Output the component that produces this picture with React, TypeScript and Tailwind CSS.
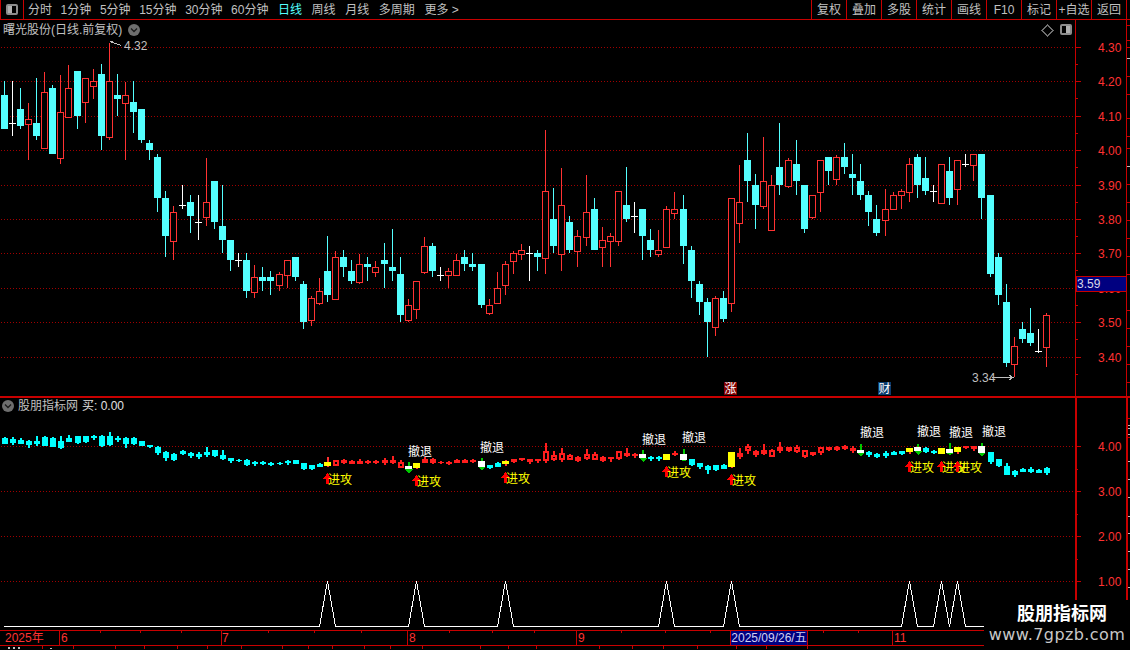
// K线行情页:主图 + 股朋指标网副图
const CYAN = '#54ffff'
const RED = '#ff3232'
const LINE = '#c80000'
const GRID = '#a00000'
const GRAY = '#c0c0c0'

const px = (i: number) => Math.round(3.8 + 8.08 * i)

const tabsLeft = ['分时', '1分钟', '5分钟', '15分钟', '30分钟', '60分钟']
const tabsRight = ['日线', '周线', '月线', '多周期', '更多 >']
const actions = ['复权', '叠加', '多股', '统计', '画线', 'F10', '标记', '+自选', '返回']

type Candle = [string, number, number, number, number]

// 主图K线 [类型, 上影, 实体上, 实体下, 下影],单位是页面像素
const candles: Candle[] = [
  ['c', 81, 95, 129, 129], ['w', 81, 123, 123, 136], ['c', 88, 109, 126, 129], ['r', 103, 119, 124, 160],
  ['c', 78, 123, 136, 140], ['r', 72, 92, 148, 148], ['c', 85, 88, 154, 154], ['r', 75, 112, 158, 164],
  ['r', 65, 88, 117, 117], ['c', 71, 71, 116, 129], ['r', 78, 78, 102, 123], ['r', 69, 81, 86, 99],
  ['c', 64, 74, 136, 150], ['r', 43, 81, 137, 140], ['c', 74, 95, 99, 116], ['r', 82, 95, 103, 160],
  ['c', 81, 102, 112, 133], ['c', 109, 109, 140, 143], ['c', 140, 143, 150, 160], ['c', 154, 157, 198, 212],
  ['c', 191, 198, 236, 257], ['r', 206, 212, 241, 260], ['w', 185, 205, 205, 209], ['c', 195, 202, 216, 233],
  ['w', 195, 222, 222, 240], ['r', 158, 202, 217, 226], ['c', 181, 181, 222, 229], ['c', 185, 226, 240, 253],
  ['c', 240, 240, 260, 271], ['w', 253, 260, 260, 267], ['c', 253, 260, 291, 298], ['r', 265, 277, 292, 298],
  ['c', 267, 277, 281, 291], ['c', 271, 277, 281, 295], ['r', 272, 274, 285, 291], ['r', 260, 260, 275, 288],
  ['c', 257, 257, 277, 281], ['c', 281, 284, 322, 329], ['r', 296, 298, 320, 326], ['r', 278, 291, 303, 305],
  ['c', 236, 271, 295, 302], ['r', 251, 257, 299, 299], ['c', 250, 257, 267, 277], ['c', 260, 271, 281, 284],
  ['r', 254, 264, 282, 284], ['c', 257, 264, 267, 281], ['r', 261, 267, 272, 277], ['c', 243, 260, 264, 288],
  ['c', 229, 267, 271, 281], ['c', 257, 274, 315, 322], ['r', 299, 305, 320, 322], ['r', 281, 281, 309, 319],
  ['r', 237, 246, 272, 274], ['c', 243, 246, 271, 277], ['w', 267, 275, 275, 281], ['r', 268, 271, 275, 288],
  ['r', 254, 260, 275, 275], ['c', 250, 257, 264, 271], ['c', 253, 264, 267, 271], ['c', 264, 264, 305, 308],
  ['r', 299, 305, 313, 315], ['r', 272, 288, 303, 303], ['r', 261, 264, 285, 295], ['r', 251, 253, 261, 274],
  ['r', 244, 250, 254, 260], ['w', 246, 253, 253, 281], ['c', 250, 253, 257, 271], ['r', 130, 191, 258, 274],
  ['c', 188, 219, 246, 253], ['r', 168, 205, 254, 271], ['c', 216, 222, 250, 253], ['r', 230, 236, 251, 267],
  ['r', 175, 212, 237, 246], ['c', 198, 209, 250, 250], ['r', 227, 240, 247, 267], ['r', 233, 236, 241, 267],
  ['r', 191, 191, 241, 246], ['c', 167, 205, 219, 222], ['w', 202, 216, 216, 233], ['c', 209, 209, 236, 260],
  ['c', 229, 240, 250, 257], ['r', 230, 250, 254, 257], ['r', 206, 209, 247, 247], ['r', 192, 209, 213, 219],
  ['c', 195, 209, 246, 264], ['c', 246, 250, 281, 298], ['c', 281, 284, 302, 315], ['c', 298, 302, 322, 357],
  ['r', 296, 298, 327, 336], ['c', 291, 298, 319, 322], ['r', 198, 198, 303, 312], ['r', 165, 202, 223, 243],
  ['c', 133, 160, 181, 202], ['c', 174, 185, 205, 229], ['r', 137, 181, 206, 209], ['r', 175, 185, 230, 230],
  ['c', 123, 167, 185, 195], ['r', 158, 160, 186, 188], ['c', 140, 164, 181, 195], ['c', 185, 185, 229, 233],
  ['r', 195, 195, 217, 219], ['r', 160, 160, 192, 212], ['c', 157, 157, 171, 185], ['r', 155, 157, 179, 185],
  ['c', 143, 157, 167, 174], ['c', 154, 174, 178, 195], ['c', 164, 181, 195, 200], ['c', 191, 195, 212, 226],
  ['c', 205, 219, 233, 236], ['r', 189, 209, 220, 236], ['r', 192, 195, 209, 209], ['r', 189, 191, 195, 209],
  ['r', 158, 164, 192, 202], ['c', 154, 157, 185, 198], ['c', 157, 178, 191, 195], ['w', 185, 191, 191, 202],
  ['r', 164, 164, 203, 203], ['c', 157, 171, 198, 205], ['r', 160, 160, 189, 205], ['w', 154, 164, 164, 167],
  ['r', 154, 154, 165, 181], ['c', 154, 154, 198, 219], ['c', 195, 195, 274, 277], ['c', 253, 257, 295, 305],
  ['c', 284, 302, 363, 367], ['r', 337, 346, 364, 377], ['c', 322, 329, 339, 343], ['c', 308, 333, 343, 346],
  ['w', 329, 351, 351, 353], ['r', 313, 315, 347, 367],
]

// 副图K线,数值是相对 y=395 的 3 倍坐标;y 黄块,W 白块带绿箭头
const bars: Candle[] = [
  ['c', 125, 128, 147, 148], ['c', 126, 133, 143, 150], ['c', 129, 135, 146, 147], ['c', 135, 138, 150, 159],
  ['c', 123, 138, 148, 152], ['c', 123, 126, 152, 153], ['c', 126, 128, 155, 156], ['c', 123, 138, 158, 162],
  ['c', 120, 129, 141, 142], ['c', 123, 124, 143, 147], ['c', 123, 124, 140, 144], ['c', 119, 122, 130, 135],
  ['c', 120, 122, 152, 156], ['c', 111, 123, 150, 153], ['c', 122, 129, 136, 141], ['c', 126, 129, 147, 159],
  ['c', 125, 129, 147, 150], ['c', 138, 139, 153, 153], ['c', 150, 151, 155, 159], ['c', 153, 156, 175, 180],
  ['c', 167, 170, 189, 198], ['c', 174, 176, 195, 198], ['c', 165, 168, 177, 180], ['c', 171, 174, 184, 189],
  ['c', 171, 176, 185, 192], ['c', 156, 170, 180, 186], ['c', 165, 166, 184, 186], ['c', 165, 180, 192, 195],
  ['c', 189, 190, 198, 204], ['c', 192, 194, 198, 201], ['c', 192, 195, 210, 213], ['c', 198, 201, 208, 213],
  ['c', 198, 201, 207, 210], ['c', 201, 204, 209, 213], ['c', 201, 203, 207, 209], ['c', 195, 197, 205, 210],
  ['c', 195, 196, 207, 208], ['c', 204, 205, 222, 225], ['c', 210, 211, 222, 225], ['c', 204, 207, 215, 216],
  ['y', 186, 201, 213, 216], ['r', 195, 195, 213, 213], ['r', 192, 195, 203, 207], ['r', 195, 198, 207, 207],
  ['r', 192, 198, 207, 207], ['r', 195, 197, 204, 207], ['r', 195, 197, 204, 207], ['r', 189, 195, 204, 210],
  ['r', 183, 195, 204, 207], ['r', 195, 201, 220, 220], ['W', 201, 213, 222, 237], ['y', 204, 204, 219, 222],
  ['r', 186, 192, 204, 204], ['r', 189, 192, 204, 207], ['r', 198, 200, 205, 207], ['r', 198, 200, 207, 210],
  ['r', 192, 195, 203, 204], ['r', 192, 194, 203, 204], ['r', 192, 195, 201, 204], ['W', 189, 198, 216, 225],
  ['c', 210, 211, 220, 222], ['c', 201, 204, 216, 216], ['y', 195, 198, 207, 213], ['r', 192, 192, 201, 204],
  ['r', 189, 190, 195, 198], ['r', 192, 193, 201, 207], ['r', 192, 193, 198, 204], ['r', 144, 168, 198, 204],
  ['r', 168, 180, 195, 198], ['r', 159, 174, 195, 201], ['r', 177, 180, 195, 195], ['r', 183, 186, 198, 201],
  ['r', 162, 177, 192, 195], ['r', 171, 177, 195, 195], ['r', 183, 186, 198, 201], ['r', 186, 186, 192, 201],
  ['r', 168, 168, 192, 195], ['r', 159, 174, 183, 186], ['r', 174, 177, 183, 189], ['W', 165, 177, 189, 201],
  ['c', 183, 186, 192, 198], ['c', 183, 186, 192, 198], ['y', 177, 177, 195, 195], ['r', 168, 174, 180, 183],
  ['W', 162, 177, 195, 198], ['c', 192, 193, 209, 213], ['c', 204, 205, 216, 222], ['c', 210, 212, 225, 237],
  ['c', 210, 211, 225, 228], ['c', 207, 210, 222, 222], ['y', 171, 171, 216, 219], ['r', 159, 174, 186, 192],
  ['r', 147, 153, 168, 177], ['r', 165, 168, 180, 186], ['r', 147, 165, 177, 180], ['r', 162, 165, 186, 186],
  ['r', 141, 156, 168, 174], ['r', 156, 157, 168, 171], ['r', 150, 156, 171, 174], ['r', 165, 166, 186, 189],
  ['r', 171, 172, 180, 183], ['r', 156, 157, 174, 180], ['r', 156, 156, 165, 168], ['r', 153, 156, 165, 168],
  ['r', 150, 153, 162, 165], ['r', 153, 159, 168, 174], ['W', 147, 165, 174, 183], ['c', 168, 171, 180, 186],
  ['c', 174, 177, 186, 189], ['c', 168, 174, 183, 189], ['c', 168, 170, 180, 180], ['c', 168, 169, 176, 180],
  ['y', 159, 159, 171, 177], ['W', 147, 156, 168, 180], ['c', 156, 159, 171, 174], ['c', 165, 168, 174, 177],
  ['y', 159, 159, 177, 177], ['W', 144, 162, 174, 180], ['y', 156, 156, 171, 177], ['r', 153, 154, 159, 162],
  ['r', 153, 154, 162, 168], ['W', 144, 153, 174, 183], ['c', 171, 171, 201, 207], ['c', 192, 193, 213, 216],
  ['c', 204, 213, 240, 240], ['c', 225, 228, 240, 246], ['c', 219, 221, 231, 231], ['c', 216, 222, 231, 234],
  ['c', 222, 224, 234, 234], ['c', 216, 219, 234, 240],
]

const retreats = [
  [408, 452], [480, 448], [642, 440], [682, 438], [860, 433], [917, 432], [949, 433], [982, 432],
]
const attacks = [
  [40, 479], [51, 481], [62, 478], [82, 472], [90, 480], [112, 467], [116, 467], [118, 467],
]
const mainLevels = ['4.30', '4.20', '4.10', '4.00', '3.90', '3.80', '3.70', '3.60', '3.50', '3.40']
const mainY = [47, 81, 116, 150, 185, 219, 253, 288, 322, 357]
const subLevels = [['4.00', 446], ['3.00', 491], ['2.00', 536], ['1.00', 581]] as const
const monthMarks = [[61, '6', 59], [222, '7', 221], [409, '8', 407], [578, '9', 576], [894, '11', 892]] as const
const minorTicks = [100, 140, 181, 268, 314, 361, 449, 492, 534, 621, 665, 710, 823, 858]
const stripTicks = [42, 73, 115, 144, 177, 207, 241, 282, 308, 332, 364, 390, 422, 480, 508, 536, 599, 632, 663, 697, 736, 766, 807]
const edgeTicks = [25, 40, 47, 58, 76, 94, 118, 136, 148, 166, 184, 202, 220, 238, 256, 274, 310, 328, 346, 364, 382]
const subEdgeTicks = [425, 428, 434, 461, 479, 497, 516, 533, 551, 569, 587]

function Wick({ x, from, to, fill, w = 1 }: { x: number; from: number; to: number; fill: string; w?: number }) {
  if (to <= from) return null
  return <rect x={x} y={from} width={w} height={to - from} fill={fill} />
}

function MainCandle({ c, i }: { c: Candle; i: number }) {
  const [kind, top, open, close, low] = c
  const x = px(i)
  const h = close - open
  if (kind === 'w') {
    return (
      <g>
        <rect x={x} y={top} width={1} height={low - top} fill="#fff" />
        <rect x={x - 3} y={open} width={7} height={1} fill="#fff" />
      </g>
    )
  }
  const color = kind === 'c' ? CYAN : RED
  return (
    <g>
      <Wick x={x} from={top} to={open} fill={color} />
      <Wick x={x} from={close} to={low} fill={color} />
      {kind === 'c' ? (
        <rect x={x - 3} y={open} width={7} height={h} fill={color} />
      ) : (
        <rect x={x - 2.5} y={open + 0.5} width={6} height={h} fill="#000" stroke={color} />
      )}
    </g>
  )
}

function SubBar({ b, i }: { b: Candle; i: number }) {
  const [kind, a, c, d, e] = b
  const x = px(i)
  const top = 395 + Math.round(a / 3)
  const open = 395 + Math.round(c / 3)
  const close = 395 + Math.round(d / 3)
  const low = 395 + Math.round(e / 3)
  const h = Math.max(close - open, 1)
  if (kind === 'W') {
    return (
      <g>
        <Wick x={x} from={top} to={open} fill="#00c800" w={2} />
        <polygon points={`${x - 3},${close} ${x + 5},${close} ${x + 1},${low}`} fill="#00c800" />
        <rect x={x - 3} y={open} width={7} height={h} fill="#fff" />
      </g>
    )
  }
  if (kind === 'y') {
    return (
      <g>
        <Wick x={x} from={top} to={low} fill={RED} w={2} />
        <rect x={x - 3} y={open} width={7} height={h} fill="#ffff00" />
      </g>
    )
  }
  const color = kind === 'c' ? '#00ffff' : '#ff1e1e'
  const solid = kind === 'c' || h < 4
  return (
    <g>
      <Wick x={x} from={top} to={low} fill={color} w={2} />
      {solid ? (
        <rect x={x - 2} y={open} width={6} height={h} fill={color} />
      ) : (
        <rect x={x - 1} y={open + 1} width={4} height={h - 2} fill="#000" stroke={color} strokeWidth={2} />
      )}
    </g>
  )
}

function Chevron() {
  return (
    <span className="flex h-3 w-3 items-center justify-center rounded-full bg-[#6e6e6e]">
      <svg width="8" height="6" viewBox="0 0 8 6">
        <path d="M1 1.5 L4 4.5 L7 1.5" fill="none" stroke="#1a1a1a" strokeWidth="1.3" />
      </svg>
    </span>
  )
}

function PaneIcon({ side }: { side: 'left' | 'right' }) {
  return (
    <span className="flex h-[11px] w-3 rounded-[2px] border-2 border-[#8c8c8c]">
      <span className={side === 'left' ? 'h-full w-1 bg-[#b0b0b0]' : 'ml-auto h-full w-1 bg-[#b0b0b0]'} />
    </span>
  )
}

function Toolbar() {
  return (
    <div className="flex h-5 shrink-0 items-center border-b border-[#c80000] text-[12px] text-[#c0c0c0]">
      <div className="flex h-full w-6 items-center justify-center border-x border-[#c80000]">
        <PaneIcon side="left" />
      </div>
      <div className="ml-1 flex flex-1">
        <div className="flex gap-[8.6px]">
          {tabsLeft.map((t) => (
            <span key={t}>{t}</span>
          ))}
        </div>
        <div className="ml-[9.5px] flex gap-[9.6px]">
          {tabsRight.map((t) => (
            <span key={t} className={t === '日线' ? 'text-[#54ffff]' : ''}>{t}</span>
          ))}
        </div>
      </div>
      <div className="flex h-full">
        {actions.map((t) => (
          <span key={t} className="flex h-full w-[35px] items-center justify-center border-l border-[#c80000]">{t}</span>
        ))}
        <span className="h-full w-1 border-l border-[#c80000]" />
      </div>
    </div>
  )
}

function MainPane() {
  return (
    <div className="relative flex h-[376px] shrink-0">
      <svg width="1075" height="376" viewBox="0 20 1075 376" shapeRendering="crispEdges" className="shrink-0">
        {mainY.map((y) => (
          <line key={y} x1="1" x2="1075" y1={y + 0.5} y2={y + 0.5} stroke={GRID} strokeDasharray="1 2" />
        ))}
        {candles.map((c, i) => (
          <MainCandle key={i} c={c} i={i} />
        ))}
        <path d="M109.5 41 L113 41 M110 41.5 L121 45.5" stroke={GRAY} fill="none" />
        <text x="124" y="50" fontSize="12" fill={GRAY}>4.32</text>
        <path d="M992 377.5 H1013 M1009 375 L1013 377.5 L1009 380" stroke={GRAY} fill="none" />
        <text x="972" y="382" fontSize="12" fill={GRAY}>3.34</text>
        <rect x="724" y="382" width="13" height="13" fill="#800000" />
        <text x="724.5" y="393" fontSize="12" fill="#fff">涨</text>
        <rect x="878" y="382" width="13" height="13" fill="#0a3c6e" />
        <text x="878.5" y="393" fontSize="12" fill="#fff">财</text>
        <path d="M1047.5 25 L1053 30.5 L1047.5 36 L1042 30.5 Z" fill="none" stroke="#707070" />
      </svg>
      <div className="flex-1 border-l border-[#c80000]">
        <svg width="54" height="376" viewBox="1076 20 54 376" shapeRendering="crispEdges">
          {mainY.map((y, i) => (
            <g key={y}>
              <rect x="1076" y={y} width="5" height="1" fill={LINE} />
              <rect x="1076" y={y + 17} width="2" height="1" fill={LINE} />
              <text x="1098" y={y + 5} fontSize="12" fill={RED}>{mainLevels[i]}</text>
            </g>
          ))}
          <rect x="1126" y="20" width="1" height="376" fill={LINE} />
          {edgeTicks.map((y) => (
            <rect key={y} x="1127" y={y} width="3" height="1" fill={y === 58 || y === 166 ? '#c0c0c0' : LINE} />
          ))}
          <rect x="1076" y="276" width="50" height="15" fill="#000080" stroke={LINE} />
          <text x="1077" y="288" fontSize="12" fill="#d8d8e8">3.59</text>
        </svg>
      </div>
      <div className="absolute left-[3px] top-[3px] flex items-center gap-[6px] text-[12px] leading-[14px] text-[#c0c0c0]">
        <span>曙光股份(日线.前复权)</span>
        <Chevron />
      </div>
      <div className="absolute left-[1060px] top-[4px]">
        <PaneIcon side="right" />
      </div>
    </div>
  )
}

function SubPane() {
  const pulse = [`4,626.5`]
  attacks.forEach(([i]) => {
    const x = px(i) + 0.5
    pulse.push(`${x - 8},626.5`, `${x},581`, `${x + 8},626.5`)
  })
  pulse.push('1047,626.5')
  return (
    <div className="relative flex h-[234px] shrink-0 border-t-2 border-[#c80000]">
      <svg width="1075" height="232" viewBox="0 398 1075 232" shapeRendering="crispEdges" className="shrink-0">
        {subLevels.map(([, y]) => (
          <line key={y} x1="1" x2="1075" y1={y + 0.5} y2={y + 0.5} stroke={GRID} strokeDasharray="1 2" />
        ))}
        {bars.map((b, i) => (
          <SubBar key={i} b={b} i={i} />
        ))}
        {retreats.map(([x, y]) => (
          <text key={x} x={x} y={y + 4} fontSize="12" fill="#fff">撤退</text>
        ))}
        {attacks.map(([i, y]) => {
          const x = px(i)
          return (
            <g key={i}>
              <path d={`M${x - 4} ${y} L${x + 0.5} ${y - 6} L${x + 5} ${y} H${x + 2} V${y + 5} H${x - 1} V${y} Z`} fill="#ff0000" />
              <text x={x + 1} y={y + 5} fontSize="12" fill="#ffff00">进攻</text>
            </g>
          )
        })}
        <polyline points={pulse.join(' ')} fill="none" stroke="#fff" />
      </svg>
      <div className="flex-1 border-l-2 border-[#c80000]">
        <svg width="53" height="232" viewBox="1077 398 53 232" shapeRendering="crispEdges">
          {subLevels.map(([label, y]) => (
            <g key={y}>
              <rect x="1077" y={y} width="4" height="1" fill={LINE} />
              <rect x="1077" y={y + 23} width="1" height="1" fill={LINE} />
              <text x="1098" y={y + 5} fontSize="12" fill={RED}>{label}</text>
            </g>
          ))}
          <rect x="1126" y="398" width="2" height="232" fill={LINE} />
          <rect x="1128" y="418" width="2" height="1" fill={LINE} />
          <rect x="1128" y="437" width="2" height="1" fill={LINE} />
          {subEdgeTicks.map((y) => (
            <rect key={y} x="1128" y={y} width="2" height="1" fill="#c0c0c0" />
          ))}
        </svg>
      </div>
      <div className="absolute left-[2px] top-[1px] flex items-center gap-1 text-[12px] leading-[14px]">
        <Chevron />
        <span className="text-[#c0c0c0]">股朋指标网</span>
        <span className="text-[#e0e0e0]">买: 0.00</span>
      </div>
    </div>
  )
}

function TimeAxis() {
  return (
    <div className="relative h-[16px] shrink-0 border-y border-[#c80000] text-[12px] leading-[14px] text-[#ff3232]">
      <svg width="1130" height="14" viewBox="0 631 1130 14" shapeRendering="crispEdges" className="absolute left-0 top-0">
        {monthMarks.map(([x, label, line]) => (
          <g key={label}>
            <rect x={line} y="631" width="1" height="14" fill={LINE} />
            <text x={x} y="642" fontSize="12" fill={RED}>{label}</text>
          </g>
        ))}
        {minorTicks.map((x) => (
          <rect key={x} x={x} y="631" width="1" height="2" fill={LINE} />
        ))}
      </svg>
      <span className="absolute left-[5px] top-0">2025年</span>
      <span className="absolute left-[730px] top-0 h-[14px] w-[78px] border-x border-[#c80000] bg-[#000080] text-center text-[#d0d0f0]">2025/09/26/五</span>
    </div>
  )
}

function BottomStrip() {
  return (
    <div className="h-[3px] overflow-hidden">
      <svg width="1130" height="3" viewBox="0 647 1130 3" shapeRendering="crispEdges">
        {stripTicks.map((x) => (
          <rect key={x} x={x} y="647" width="1" height="3" fill={LINE} />
        ))}
        <rect x="8" y="648" width="2" height="2" fill={GRAY} />
        <rect x="13" y="648" width="2" height="2" fill={GRAY} />
        <rect x="18" y="648" width="2" height="2" fill={GRAY} />
        <rect x="50" y="649" width="2" height="1" fill={GRAY} />
      </svg>
    </div>
  )
}

export default function App() {
  return (
    <div className="relative flex h-[650px] w-[1130px] flex-col overflow-hidden bg-black font-['Liberation_Sans','Noto_Sans_CJK_SC',sans-serif]">
      <Toolbar />
      <MainPane />
      <SubPane />
      <TimeAxis />
      <BottomStrip />
      <div className="absolute left-[984px] top-[600px] flex h-[50px] w-[146px] flex-col items-center bg-black pt-[3px]">
        <span className="ml-[10px] text-[18px] font-bold leading-[22px] text-white">股朋指标网</span>
        <span className="font-['DejaVu_Sans',sans-serif] text-[16px] leading-[19px] tracking-[0.4px] text-[#c8c8c8]">www.7gpzb.com</span>
      </div>
    </div>
  )
}
